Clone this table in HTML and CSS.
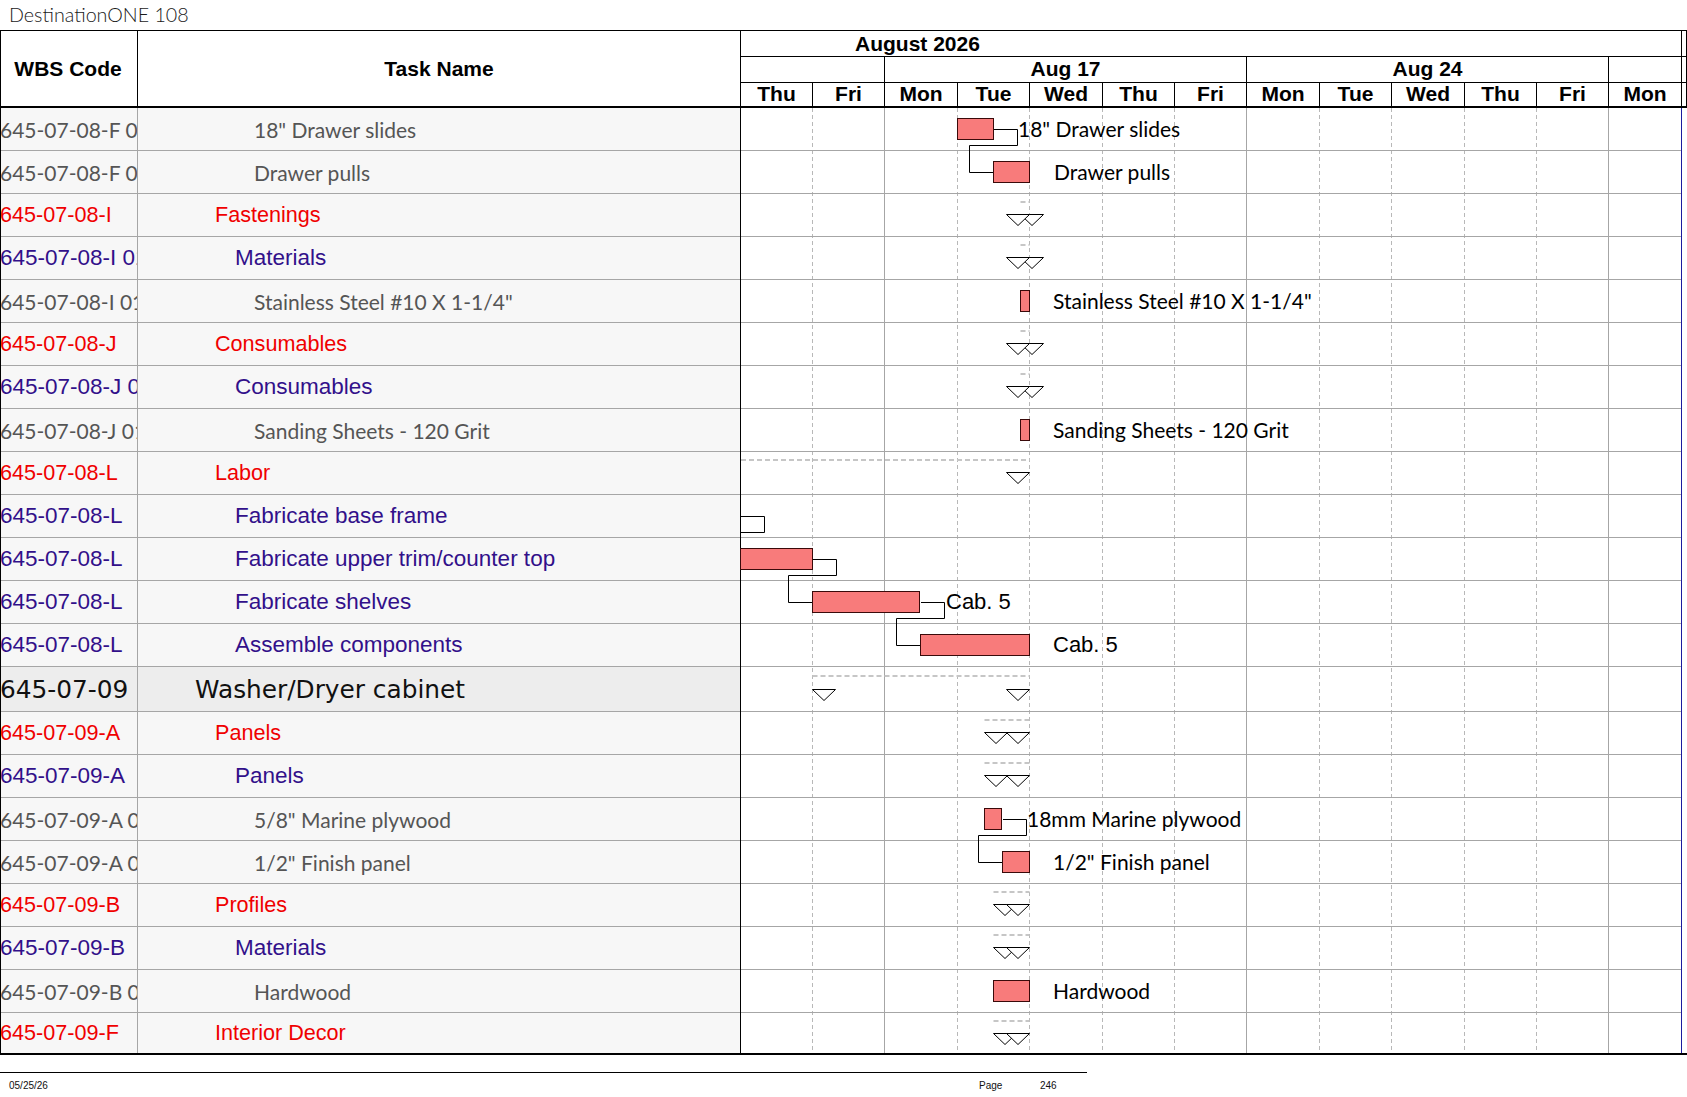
FILE: index.html
```html
<!DOCTYPE html>
<html>
<head>
<meta charset="utf-8">
<title>DestinationONE 108</title>
<link rel="stylesheet" href="styles.css">
</head>
<body>
<div class="title">DestinationONE 108</div>
<div class="sheet">
  <div class="head">
    <div class="h-wbs">WBS Code</div>
    <div class="h-task">Task Name</div>
    <div class="timescale">
      <div class="ts month">August 2026</div>
      <div class="ts sp sb"></div>
      <div class="ts wk w0"></div>
      <div class="ts wk w1">Aug 17</div>
      <div class="ts wk w2">Aug 24</div>
      <div class="ts wk w3"></div>
      <div class="ts sp sb"></div>
      <div class="ts day">Thu</div>
      <div class="ts day">Fri</div>
      <div class="ts day">Mon</div>
      <div class="ts day">Tue</div>
      <div class="ts day">Wed</div>
      <div class="ts day">Thu</div>
      <div class="ts day">Fri</div>
      <div class="ts day">Mon</div>
      <div class="ts day">Tue</div>
      <div class="ts day">Wed</div>
      <div class="ts day">Thu</div>
      <div class="ts day">Fri</div>
      <div class="ts day">Mon</div>
      <div class="ts sp"></div>
    </div>
  </div>
  <div class="body">
    <div class="tbl">
      <div class="row"><div class="wbs gry">645-07-08-F 01</div><div class="name l4 gry">18" Drawer slides</div></div>
      <div class="row"><div class="wbs gry">645-07-08-F 02</div><div class="name l4 gry">Drawer pulls</div></div>
      <div class="row"><div class="wbs red">645-07-08-I</div><div class="name l2 red">Fastenings</div></div>
      <div class="row"><div class="wbs pur">645-07-08-I 01</div><div class="name l3 pur">Materials</div></div>
      <div class="row"><div class="wbs gry">645-07-08-I 01-01</div><div class="name l4 gry">Stainless Steel #10 X 1-1/4"</div></div>
      <div class="row"><div class="wbs red">645-07-08-J</div><div class="name l2 red">Consumables</div></div>
      <div class="row"><div class="wbs pur">645-07-08-J 01</div><div class="name l3 pur">Consumables</div></div>
      <div class="row"><div class="wbs gry">645-07-08-J 01-01</div><div class="name l4 gry">Sanding Sheets - 120 Grit</div></div>
      <div class="row"><div class="wbs red">645-07-08-L</div><div class="name l2 red">Labor</div></div>
      <div class="row"><div class="wbs pur">645-07-08-L</div><div class="name l3 pur">Fabricate base frame</div></div>
      <div class="row"><div class="wbs pur">645-07-08-L</div><div class="name l3 pur">Fabricate upper trim/counter top</div></div>
      <div class="row"><div class="wbs pur">645-07-08-L</div><div class="name l3 pur">Fabricate shelves</div></div>
      <div class="row"><div class="wbs pur">645-07-08-L</div><div class="name l3 pur">Assemble components</div></div>
      <div class="row big"><div class="wbs blk">645-07-09</div><div class="name l1 blk">Washer/Dryer cabinet</div></div>
      <div class="row"><div class="wbs red">645-07-09-A</div><div class="name l2 red">Panels</div></div>
      <div class="row"><div class="wbs pur">645-07-09-A</div><div class="name l3 pur">Panels</div></div>
      <div class="row"><div class="wbs gry">645-07-09-A 01</div><div class="name l4 gry">5/8" Marine plywood</div></div>
      <div class="row"><div class="wbs gry">645-07-09-A 02</div><div class="name l4 gry">1/2" Finish panel</div></div>
      <div class="row"><div class="wbs red">645-07-09-B</div><div class="name l2 red">Profiles</div></div>
      <div class="row"><div class="wbs pur">645-07-09-B</div><div class="name l3 pur">Materials</div></div>
      <div class="row"><div class="wbs gry">645-07-09-B 01</div><div class="name l4 gry">Hardwood</div></div>
      <div class="row last"><div class="wbs red">645-07-09-F</div><div class="name l2 red">Interior Decor</div></div>
    </div>
    <div class="gantt">
      <svg width="941" height="945" viewBox="0 0 941 945" xmlns="http://www.w3.org/2000/svg">
        <g class="vdash">
          <line x1="72.5" y1="0" x2="72.5" y2="945"/>
          <line x1="217.5" y1="0" x2="217.5" y2="945"/>
          <line x1="289.5" y1="0" x2="289.5" y2="945"/>
          <line x1="362.5" y1="0" x2="362.5" y2="945"/>
          <line x1="434.5" y1="0" x2="434.5" y2="945"/>
          <line x1="579.5" y1="0" x2="579.5" y2="945"/>
          <line x1="651.5" y1="0" x2="651.5" y2="945"/>
          <line x1="724.5" y1="0" x2="724.5" y2="945"/>
          <line x1="796.5" y1="0" x2="796.5" y2="945"/>
        </g>
        <g class="hline">
          <line x1="1" y1="42.5" x2="941" y2="42.5"/>
          <line x1="1" y1="85.5" x2="941" y2="85.5"/>
          <line x1="1" y1="128.5" x2="941" y2="128.5"/>
          <line x1="1" y1="171.5" x2="941" y2="171.5"/>
          <line x1="1" y1="214.5" x2="941" y2="214.5"/>
          <line x1="1" y1="257.5" x2="941" y2="257.5"/>
          <line x1="1" y1="300.5" x2="941" y2="300.5"/>
          <line x1="1" y1="343.5" x2="941" y2="343.5"/>
          <line x1="1" y1="386.5" x2="941" y2="386.5"/>
          <line x1="1" y1="429.5" x2="941" y2="429.5"/>
          <line x1="1" y1="472.5" x2="941" y2="472.5"/>
          <line x1="1" y1="515.5" x2="941" y2="515.5"/>
          <line x1="1" y1="558.5" x2="941" y2="558.5"/>
          <line x1="1" y1="603.5" x2="941" y2="603.5"/>
          <line x1="1" y1="646.5" x2="941" y2="646.5"/>
          <line x1="1" y1="689.5" x2="941" y2="689.5"/>
          <line x1="1" y1="732.5" x2="941" y2="732.5"/>
          <line x1="1" y1="775.5" x2="941" y2="775.5"/>
          <line x1="1" y1="818.5" x2="941" y2="818.5"/>
          <line x1="1" y1="861.5" x2="941" y2="861.5"/>
          <line x1="1" y1="904.5" x2="941" y2="904.5"/>
          <line x1="144.5" y1="0" x2="144.5" y2="945"/>
          <line x1="506.5" y1="0" x2="506.5" y2="945"/>
          <line x1="868.5" y1="0" x2="868.5" y2="945"/>
        </g>
        <line class="edgeline" x1="0.5" y1="0" x2="0.5" y2="945"/>

        <g class="sumline">
          <line x1="280.5" y1="94" x2="289.5" y2="94"/>
          <line x1="280.5" y1="137" x2="289.5" y2="137"/>
          <line x1="280.5" y1="223" x2="289.5" y2="223"/>
          <line x1="280.5" y1="266" x2="289.5" y2="266"/>
          <line x1="1" y1="352" x2="289.5" y2="352"/>
          <line x1="72.5" y1="568" x2="289.5" y2="568"/>
          <line x1="244.5" y1="612" x2="289.5" y2="612"/>
          <line x1="244.5" y1="655" x2="289.5" y2="655"/>
          <line x1="253.5" y1="784" x2="289.5" y2="784"/>
          <line x1="253.5" y1="827" x2="289.5" y2="827"/>
          <line x1="253.5" y1="913" x2="289.5" y2="913"/>
        </g>

        <g class="conn">
          <path d="M254,21.5 H277.5 V37.5 H229.5 V64.5 H253"/>
          <path d="M1,408.5 H24.5 V424.5 H1"/>
          <path d="M73,451.5 H96.5 V467.5 H48.5 V494.5 H72"/>
          <path d="M181,494.5 H204.5 V510.5 H156.5 V537.5 H180"/>
          <path d="M263,711.5 H286.5 V727.5 H238.5 V754.5 H262"/>
        </g>

        <g class="bar">
          <rect x="217.5" y="10.5" width="36" height="21"/>
          <rect x="253.5" y="53.5" width="36" height="21"/>
          <rect x="280.5" y="182.5" width="9" height="21"/>
          <rect x="280.5" y="311.5" width="9" height="21"/>
          <rect x="0.5" y="440.5" width="72" height="21"/>
          <rect x="72.5" y="483.5" width="107" height="21"/>
          <rect x="180.5" y="526.5" width="109" height="21"/>
          <rect x="244.5" y="700.5" width="17" height="21"/>
          <rect x="262.5" y="743.5" width="27" height="21"/>
          <rect x="253.5" y="872.5" width="36" height="21"/>
        </g>

        <g class="tri">
          <polygon points="280.5,106.5 303.5,106.5 292,117.5"/>
          <polygon points="266.5,106.5 289.5,106.5 278,117.5"/>
          <polygon points="280.5,149.5 303.5,149.5 292,160.5"/>
          <polygon points="266.5,149.5 289.5,149.5 278,160.5"/>
          <polygon points="280.5,235.5 303.5,235.5 292,246.5"/>
          <polygon points="266.5,235.5 289.5,235.5 278,246.5"/>
          <polygon points="280.5,278.5 303.5,278.5 292,289.5"/>
          <polygon points="266.5,278.5 289.5,278.5 278,289.5"/>
          <polygon points="266.5,364.5 289.5,364.5 278,375.5"/>
          <polygon points="72.5,581.5 95.5,581.5 84,592.5"/>
          <polygon points="266.5,581.5 289.5,581.5 278,592.5"/>
          <polygon points="244.5,624.5 267.5,624.5 256,635.5"/>
          <polygon points="266.5,624.5 289.5,624.5 278,635.5"/>
          <polygon points="244.5,667.5 267.5,667.5 256,678.5"/>
          <polygon points="266.5,667.5 289.5,667.5 278,678.5"/>
          <polygon points="253.5,796.5 276.5,796.5 265,807.5"/>
          <polygon points="266.5,796.5 289.5,796.5 278,807.5"/>
          <polygon points="253.5,839.5 276.5,839.5 265,850.5"/>
          <polygon points="266.5,839.5 289.5,839.5 278,850.5"/>
          <polygon points="253.5,925.5 276.5,925.5 265,936.5"/>
          <polygon points="266.5,925.5 289.5,925.5 278,936.5"/>
        </g>

        <text class="lbl" x="278" y="29">18" Drawer slides</text>
        <text class="lbl" x="314" y="72">Drawer pulls</text>
        <text class="lbl" x="313" y="201">Stainless Steel #10 X 1-1/4"</text>
        <text class="lbl" x="313" y="330">Sanding Sheets - 120 Grit</text>
        <text class="lbl arial" x="206" y="501">Cab. 5</text>
        <text class="lbl arial" x="313" y="544">Cab. 5</text>
        <text class="lbl" x="287" y="719">18mm Marine plywood</text>
        <text class="lbl" x="313" y="762">1/2" Finish panel</text>
        <text class="lbl" x="313" y="891">Hardwood</text>
      </svg>
    </div>
    <div class="edge"></div>
  </div>
</div>
<div class="footer">
  <span class="fdate">05/25/26</span>
  <span class="fpage">Page</span>
  <span class="fnum">246</span>
</div>
</body>
</html>
```

FILE: styles.css
```css
* { box-sizing: border-box; }
html, body { margin: 0; padding: 0; background: #ffffff; }
body {
  width: 1687px;
  height: 1097px;
  overflow: hidden;
  font-family: "Liberation Sans", Arial, sans-serif;
  color: #000;
}

.title {
  height: 30px;
  padding-left: 9px;
  font-family: Lato, "Noto Sans", sans-serif;
  font-weight: 300;
  font-size: 19.7px;
  line-height: 30px;
  color: #1a1a1a;
}

.sheet {
  width: 1687px;
  border-top: 1px solid #000;
  border-left: 1px solid #000;
}

/* ---------- header ---------- */
.head {
  display: flex;
  height: 77px;
  border-bottom: 2px solid #000;
}
.h-wbs, .h-task {
  display: flex;
  align-items: center;
  justify-content: center;
  font-weight: bold;
  font-size: 21px;
}
.h-wbs { width: 137px; border-right: 1px solid #000; padding-right: 2px; }
.h-task { width: 602px; }

.timescale {
  width: 947px;
  display: grid;
  grid-template-columns: 72px 72px 73px 72px 73px 72px 72px 73px 72px 73px 72px 72px 73px 6px;
  grid-template-rows: 26px 26px 23px;
}
.ts {
  border-left: 1px solid #000;
  display: flex;
  align-items: center;
  justify-content: center;
  font-weight: bold;
  font-size: 21px;
  line-height: 1;
  white-space: nowrap;
}
.month {
  grid-column: 1 / 14;
  justify-content: flex-start;
  padding-left: 114px;
  border-bottom: 1px solid #000;
}
.wk { border-bottom: 1px solid #000; padding-bottom: 2px; }
.w0 { grid-column: 1 / 3; }
.w1 { grid-column: 3 / 8; }
.w2 { grid-column: 8 / 13; }
.w3 { grid-column: 13 / 14; }
.sp { grid-column: 14 / 15; border-right: 1px solid #000; }
.sb { border-bottom: 1px solid #000; }
.day { padding-bottom: 2px; }

/* ---------- body ---------- */
.body {
  display: flex;
  border-bottom: 2px solid #000;
}
.tbl { width: 739px; }
.row {
  display: flex;
  height: 43px;
  border-bottom: 1px solid #a6a6a6;
  background: #f7f7f7;
}
.row.big { height: 45px; background: #ededed; }
.row.last { height: 40px; border-bottom: none; }

.wbs {
  width: 137px;
  border-right: 1px solid #a6a6a6;
  overflow: hidden;
  white-space: nowrap;
  display: flex;
  align-items: center;
  text-indent: -1px;
}
.name {
  flex: 1;
  overflow: hidden;
  white-space: nowrap;
  display: flex;
  align-items: center;
}
.l1 { padding-left: 57px; }
.l2 { padding-left: 77px; }
.l3 { padding-left: 97px; }
.l4 { padding-left: 116px; }

.red { color: #f00000; font-family: "Liberation Sans", Arial, sans-serif; font-size: 21.6px; }
.pur { color: #32108a; font-family: "Liberation Sans", Arial, sans-serif; font-size: 22.5px; }
.gry { color: #555555; font-family: Lato, "Open Sans", sans-serif; font-size: 21px; }
.blk { color: #111111; font-family: "DejaVu Sans", Verdana, sans-serif; font-size: 24.8px; }

.gantt { width: 941px; background: #fff; }
.gantt svg { display: block; }
.edge { width: 6px; border-left: 1px solid #1c1c9e; background: #fff; }

.vdash line { stroke: #b8b8b8; stroke-width: 1; stroke-dasharray: 4 3; }
.hline line { stroke: #a6a6a6; stroke-width: 1; }
.edgeline { stroke: #000; stroke-width: 1; }
.sumline line { stroke: #c6c6c6; stroke-width: 2; stroke-dasharray: 5 3; }
.conn path { fill: none; stroke: #000; stroke-width: 1; }
.bar rect { fill: #f87b7b; stroke: #3a0a0a; stroke-width: 1; }
.tri polygon { fill: #fff; stroke: #000; stroke-width: 1; }
.lbl { font-family: Lato, "Open Sans", sans-serif; font-size: 21px; fill: #000; }
.lbl.arial { font-family: "Liberation Sans", Arial, sans-serif; font-size: 22px; }

/* ---------- footer ---------- */
.footer {
  margin-top: 17px;
  width: 1087px;
  border-top: 1px solid #000;
  display: flex;
  font-family: "Liberation Sans", Arial, sans-serif;
  font-size: 10px;
  line-height: 12px;
  padding-top: 7px;
  color: #111;
}
.fdate { width: 979px; padding-left: 9px; }
.fpage { width: 61px; }
.fnum { width: 47px; }
```
